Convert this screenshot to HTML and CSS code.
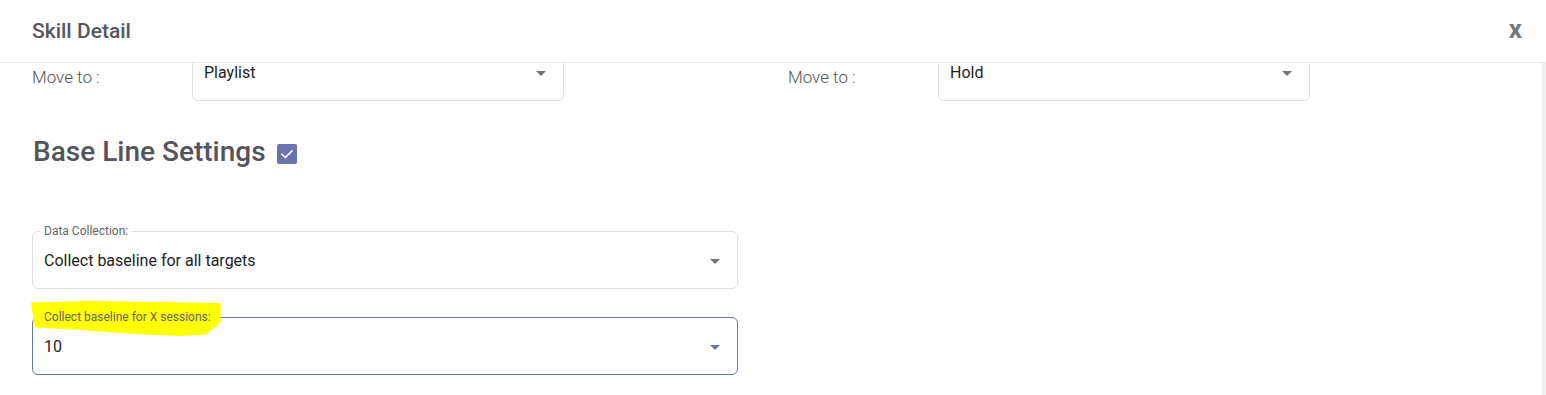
FILE: index.html
```html
<!DOCTYPE html>
<html lang="en">
<head>
    <meta charset="UTF-8">
    <meta name="viewport" content="width=device-width, initial-scale=1.0">
    <title>Skill Detail</title>
    <link rel="stylesheet" href="styles.css">
</head>
<body>
    <div class="modal">
        <div class="modal-header">
            <h3 class="modal-title">Skill Detail</h3>
            <span class="close-btn">x</span>
        </div>

        <div class="modal-body">
            <div class="body-inner">
                <!-- Move to selects -->
                <div class="move-row">
                    <div class="move-col">
                        <label class="move-label">Move to :</label>
                        <div class="select-box">
                            <span>Playlist</span>
                            <span class="caret"></span>
                        </div>
                    </div>
                    <div class="move-col move-col-right">
                        <label class="move-label">Move to :</label>
                        <div class="select-box">
                            <span>Hold</span>
                            <span class="caret"></span>
                        </div>
                    </div>
                </div>

                <h2 class="section-title">
                    Base Line Settings
                    <span class="checkbox">
                        <svg width="16" height="16" viewBox="0 0 16 16"><path d="M3 8.3 L6.4 11.5 L13 4.8" fill="none" stroke="#fff" stroke-width="1.7" stroke-linecap="round" stroke-linejoin="round"/></svg>
                    </span>
                </h2>

                <fieldset class="field">
                    <legend>Data Collection:</legend>
                    <div class="field-value">
                        <span>Collect baseline for all targets</span>
                        <span class="caret"></span>
                    </div>
                </fieldset>

                <fieldset class="field field-focused">
                    <legend class="marked">Collect baseline for X sessions:</legend>
                    <div class="field-value">
                        <span>10</span>
                        <span class="caret"></span>
                    </div>
                </fieldset>
            </div>
        </div>
    </div>
</body>
</html>
```

FILE: styles.css
```css
body {
    font-family: Roboto, "Liberation Sans", sans-serif;
    margin: 0;
    background: #fff;
    color: #222;
}

.modal {
    height: 100vh;
    display: flex;
    flex-direction: column;
}

/* Header */
.modal-header {
    height: 62px;
    flex-shrink: 0;
    display: flex;
    justify-content: space-between;
    align-items: center;
    padding: 0 24px 0 32px;
    border-bottom: 1px solid #e7e7ee;
}

.modal-title {
    margin: 0;
    font-size: 21px;
    font-weight: 500;
    color: #55575f;
}

.close-btn {
    font-size: 26px;
    font-weight: 700;
    color: #777;
    line-height: 1;
    margin-top: -4px;
    cursor: pointer;
}

/* Body (scrolled a little) */
.modal-body {
    flex: 1;
    overflow: hidden;
    border-right: 4px solid #efefef;
}

.body-inner {
    margin-top: -19px;
    padding: 0 32px;
}

.move-row {
    display: grid;
    grid-template-columns: 756px 1fr;
}

.move-col {
    display: flex;
    align-items: center;
}

.move-label {
    width: 160px;
    flex-shrink: 0;
    padding-top: 8px;
    font-size: 17px;
    font-weight: 300;
    color: #555;
}

.move-col-right .move-label {
    width: 150px;
}

.select-box {
    width: 372px;
    height: 57px;
    box-sizing: border-box;
    border: 1px solid #e0e0e0;
    border-radius: 6px;
    display: flex;
    align-items: center;
    justify-content: space-between;
    padding: 0 17px 0 11px;
    font-size: 16px;
}

.caret {
    width: 0;
    height: 0;
    border-left: 5.5px solid transparent;
    border-right: 5.5px solid transparent;
    border-top: 5.5px solid #757575;
    margin-top: 2px;
}

/* Base line settings */
.section-title {
    margin: 33px 0 0 1px;
    font-size: 28px;
    font-weight: 500;
    line-height: 36px;
    color: #53545c;
    display: flex;
    align-items: center;
}

.checkbox {
    width: 20px;
    height: 20px;
    margin-left: 11px;
    margin-top: 4px;
    border-radius: 2px;
    background: #6b72b0;
    display: flex;
    align-items: center;
    justify-content: center;
}

/* Outlined fields */
.field {
    width: 706px;
    box-sizing: border-box;
    margin: 54px 0 0;
    padding: 0 17px 6px 11px;
    border: 1px solid #e0e0e0;
    border-radius: 6px;
}

.field + .field {
    margin-top: 21px;
}

.field legend {
    padding: 0 4px;
    margin-left: -4px;
    font-size: 12px;
    line-height: 14px;
    color: #666;
}

.field-value {
    height: 44px;
    display: flex;
    align-items: center;
    justify-content: space-between;
    font-size: 16px;
}

.field-focused {
    border-color: #6b72b0;
}

.field-focused .caret {
    border-top-color: #6b72b0;
}

/* yellow marker drawn over the label */
.marked {
    position: relative;
    z-index: 0;
}

.marked::before {
    content: "";
    position: absolute;
    left: -9px;
    right: -6px;
    top: -9px;
    bottom: -12px;
    z-index: -1;
    background: #ffff00;
    clip-path: polygon(0% 4%, 30% 0%, 100% 6%, 100% 62%, 92% 96%, 78% 100%, 55% 94%, 25% 82%, 2% 76%);
}
```
